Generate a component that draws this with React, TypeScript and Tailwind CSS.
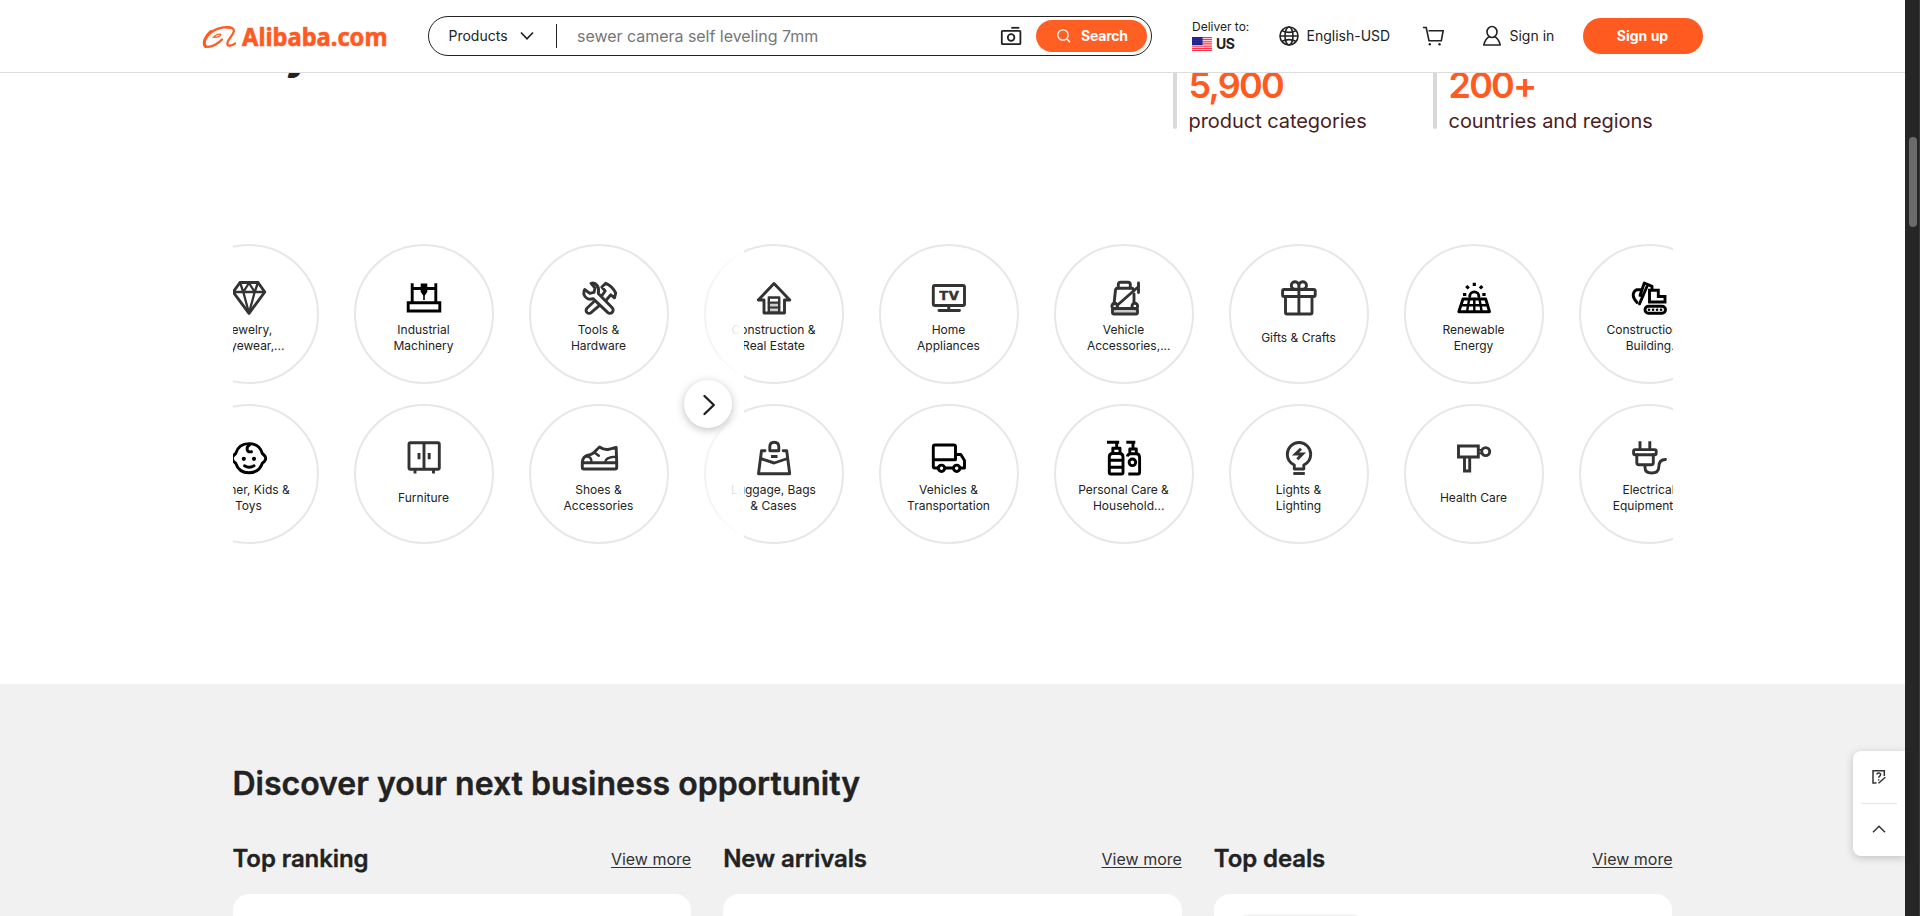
import React from "react";

type Category = {
  lines: string[];
  more?: boolean;
  icon: React.ReactNode;
  black?: boolean;
};

const gem = (
  <>
    <path d="M9 2.5H27L33.8 12 18 33.3 2.2 12Z" />
    <path d="M2.5 12H33.5M9 2.5L12.3 12 18 3 23.7 12 27 2.5M12.3 12L18 33 23.7 12" strokeWidth="2.3" />
  </>
);

const machine = (
  <>
    <path d="M6.2 3.3V22M29.8 3.3V22M6.2 8.5H29.8" strokeLinecap="butt" />
    <path d="M14.7 3.5H21.3V12L18.8 15.5V20H17.2V15.5L14.7 12Z" fill="currentColor" stroke="none" />
    <path d="M2.2 22.8H33.8V31H2.2Z" strokeLinejoin="miter" />
  </>
);

const tools = (
  <>
    <path d="M10 3.3L14 8 13 12.3 8.8 13.3 3.7 9.5C.8 15.5 6 20.8 12 18.6L26.6 32.4A3.1 3.1 0 0 0 31.2 27.8L17.3 13.6C18.8 7 15 1.8 10 3.3Z" />
    <path d="M20.8 7L24.8 3.3C29 5 32.5 8.5 34.7 13L33.5 17.8 29.8 14.8 25.3 20M20.8 7L24.2 11 21 15.5" />
    <path d="M12.5 22L5.9 28.2A3 3 0 0 0 10.3 32.4L18 25.8" />
  </>
);

const house = (
  <>
    <path d="M18 3.5L2.3 20H8V33H28.5V20H33.8Z" />
    <path d="M12.8 17.5H23.2V32.5H12.8Z" fill="#ccc" strokeWidth="2.4" />
    <path d="M14 19h8v3h-8z" fill="white" stroke="none" />
    <path d="M12.8 22.7H23.2M12.8 27.5H23.2" strokeWidth="2.2" />
  </>
);

const tv = (
  <>
    <rect x="2.3" y="5.5" width="31.2" height="20" rx="1.5" />
    <path d="M17.8 25.5V30M8 30.5H28.5" />
    <text x="8" y="19.6" fontSize="11.8" fontWeight="700" fill="currentColor" strokeWidth=".6" textLength="20" lengthAdjust="spacingAndGlyphs">
      TV
    </text>
  </>
);

const seat = (
  <>
    <path d="M12.3 8V4.5Q12.3 2.3 14.5 2.3H22Q24.3 2.3 24.3 4.5V8" />
    <path d="M8 24L9.5 10Q9.8 8.3 11.5 8.3H25.5Q27.5 8.3 27.5 10.5M28 14V23" />
    <rect x="6.5" y="28.5" width="25" height="5.5" rx="1.5" fill="#ccc" />
    <circle cx="8.7" cy="26" r="2.8" />
    <circle cx="28.8" cy="26" r="2.8" />
    <path d="M11 25.5L31.5 7.5M32.5 3V12.5" />
  </>
);

const gift = (
  <>
    <rect x="1.6" y="9.5" width="32.6" height="7" rx="1.5" />
    <path d="M4.5 16.5V32.5Q4.5 34 6 34H29.5Q31 34 31 32.5V16.5M17.9 9.5V34" />
    <path d="M17.9 9.3H13.5A3.8 3.8 0 1 1 17.9 5.5V9.3H22.3A3.8 3.8 0 1 0 17.9 5.5" />
  </>
);

const solar = (
  <>
    <path d="M7 19H29.7L33.5 31.7H2.8Z" />
    <path d="M5 25.3H31.5M13.2 19L11 31.7M18.3 19V31.7M23.5 19L25.7 31.7" strokeWidth="2.4" />
    <path d="M13.7 16.5a4.6 4.6 0 1 1 9.2 0" />
    <path d="M18.3 2.7V6M10.3 6L12.7 8.5M26.3 6L23.9 8.5M7 14.5H10.3M26.3 14.5H29.6" strokeLinecap="butt" strokeWidth="3.2" />
  </>
);

const excavator = (
  <>
    <rect x="14" y="26.3" width="20.5" height="7" rx="3.5" />
    <path d="M18 29.8h.1M22 29.8h.1M26 29.8h.1M30 29.8h.1" strokeWidth="2.6" />
    <path d="M18.5 10.3H27.3V16.5H34V22H18.5Z" strokeLinejoin="miter" />
    <path d="M9 15.5L13.3 3 21 6.3V9.8M16 6.5L8.5 23.8" />
    <path d="M9.5 9.8H5.5C1 12.5 1 17 6 22.5" />
  </>
);

const baby = (
  <>
    <path d="M18 3.6C25 3.6 29.6 7.5 31.3 13.5C35.8 17 35.8 20 31.3 23.2C29.3 29.2 24.8 32.8 18 32.8S6.7 29.2 4.7 23.2C.2 20 .2 17 4.7 13.5C6.4 7.5 11 3.6 18 3.6Z" />
    <path d="M18.5 5C15 7 15 12.6 20.5 11.8" />
    <path d="M13.5 25.8Q18.2 28.8 23 25.8" />
    <circle cx="12.8" cy="18.8" r="2.1" fill="currentColor" stroke="none" />
    <circle cx="23" cy="18.8" r="2.1" fill="currentColor" stroke="none" />
  </>
);

const cabinet = (
  <>
    <rect x="3" y="2.8" width="30.3" height="26.4" rx="1.5" />
    <path d="M18 2.8V29.2M13 13V19.3M23.2 13V19.3M9 29.2V33.5M27.5 29.2V33.5" strokeLinecap="butt" />
  </>
);

const shoe = (
  <>
    <path d="M1.3 22.8H35.7V27.5Q35.7 29 34.2 29H2.8Q1.3 29 1.3 27.5Z" />
    <path d="M1.3 22.8C1.3 18.5 4 15.5 9 14.8C13 13.8 15.5 9.5 18.5 7C21 8.8 24 10 28 9.3C31 8.8 32.5 7.8 35.2 7.5L35.7 22.8" />
    <path d="M4.5 16.5C8.5 15.8 10.8 18.5 10.5 22.5M24 22.5C24.3 19 28.5 16.8 35.2 16.8M13.5 12.5L17.8 15.8" strokeWidth="2.5" />
  </>
);

const bag = (
  <>
    <path d="M13.8 10.8V6.8Q13.8 2.2 18.2 2.2Q22.8 2.2 22.8 6.8V10.8Z" />
    <path d="M9 10.8H5.5L2.5 33.7H33.7L30.7 10.8H27.2M4.7 18.5L18.2 23 31.5 18.5" />
    <path d="M15 16.5H21.5" strokeLinecap="butt" strokeWidth="3" />
  </>
);

const truck = (
  <>
    <path d="M7 28H3.8Q2.3 28 2.3 26.5V6.5Q2.3 5 3.8 5H22.8Q24.5 5 24.5 6.5V14.5H29.8L33.5 20.5V28H29.3M14 28H21.8M2.3 19.8H24.5V14.5" />
    <circle cx="10.5" cy="28.3" r="3.2" />
    <circle cx="25.7" cy="28.3" r="3.2" />
  </>
);

const bottles = (
  <>
    <path d="M3.3 17Q3.3 13.5 6.7 13.5H13.5Q17 13.5 17 17V32.5Q17 34 15.5 34H4.8Q3.3 34 3.3 32.5Z" />
    <path d="M3.3 20.3H17M3.3 27.3H17M6.8 13V8.3H14V13M10.7 8V2.2M1 2.2H13.2" strokeLinecap="butt" />
    <path d="M22.3 34H32Q33.6 34 33.6 32.5V17.5Q33.6 13.8 30 13.8H24.5Q22 13.8 21.3 16.5M23.8 13.5V9H30.3V13.5M27 8.5V2.2M20.3 2.2H29.3" strokeLinecap="butt" />
    <circle cx="26.4" cy="22.3" r="3.3" />
  </>
);

const bulb = (
  <>
    <path d="M13.3 29V25C8.7 22.8 6.3 19 6.3 14.2A11.7 11.7 0 0 1 29.7 14.2C29.7 19 27.3 22.8 22.8 25V29Z" />
    <path d="M12.3 33.5H23.8" strokeLinecap="butt" />
    <path d="M20 8.8L14.5 14H21.5L16.3 19.2" strokeLinejoin="miter" strokeLinecap="butt" />
  </>
);

const massager = (
  <>
    <path d="M2.5 6H22.3V17H2.5ZM8.5 17H13.7V31H8.5Z" strokeLinejoin="miter" />
    <circle cx="29.7" cy="11.6" r="4" />
    <path d="M22 9.8H26M22 13.4H26" strokeWidth="1.8" />
  </>
);

const plug = (
  <>
    <path d="M9 1.3V9.5M18.8 1.3V9.5" strokeLinecap="butt" />
    <rect x="2.6" y="9.6" width="22.6" height="5.2" rx="1.5" />
    <path d="M5.8 14.8V22.8Q5.8 24.8 7.8 24.8H20.3Q22.3 24.8 22.3 22.8V14.8M14 25V27.5C14 31.5 17 33 20.5 33C26 33 27.8 30.5 27.8 27C27.8 21.5 30 19.5 34.5 19.5" />
  </>
);

const rows: Category[][] = [
  [
    { lines: ["Jewelry,", "Eyewear,"], more: true, icon: gem },
    { lines: ["Industrial", "Machinery"], icon: machine, black: true },
    { lines: ["Tools &", "Hardware"], icon: tools },
    { lines: ["Construction &", "Real Estate"], icon: house },
    { lines: ["Home", "Appliances"], icon: tv },
    { lines: ["Vehicle", "Accessories,"], more: true, icon: seat },
    { lines: ["Gifts & Crafts"], icon: gift },
    { lines: ["Renewable", "Energy"], icon: solar, black: true },
    { lines: ["Construction &", "Building"], more: true, icon: excavator, black: true },
  ],
  [
    { lines: ["Mother, Kids &", "Toys"], icon: baby, black: true },
    { lines: ["Furniture"], icon: cabinet },
    { lines: ["Shoes &", "Accessories"], icon: shoe },
    { lines: ["Luggage, Bags", "& Cases"], icon: bag },
    { lines: ["Vehicles &", "Transportation"], icon: truck, black: true },
    { lines: ["Personal Care &", "Household"], more: true, icon: bottles, black: true },
    { lines: ["Lights &", "Lighting"], icon: bulb },
    { lines: ["Health Care"], icon: massager },
    { lines: ["Electrical", "Equipment &"], more: true, icon: plug },
  ],
];

function CategoryCircle({ item }: { item: Category }) {
  return (
    <div className="flex size-[140px] shrink-0 flex-col items-center rounded-full border-2 border-[#e7e7e7] pt-[34px]">
      <svg
        viewBox="0 0 36 36"
        className={`size-9 shrink-0 overflow-visible ${item.black ? "text-black" : "text-[#333]"}`}
        fill="none"
        stroke="currentColor"
        strokeWidth="2.9"
        strokeLinecap="round"
        strokeLinejoin="round"
      >
        {item.icon}
      </svg>
      <div className="mt-[6px] flex h-8 flex-col justify-center text-center text-xs leading-4 whitespace-nowrap text-[#222]">
        {item.lines.map((line, i) => (
          <div key={line}>
            {line}
            {item.more && i === item.lines.length - 1 && <span className="inline-block h-4 w-0 align-top">...</span>}
          </div>
        ))}
      </div>
    </div>
  );
}

function Stat({ value, label }: { value: string; label: string }) {
  return (
    <div className="flex w-[260px] gap-[11.5px]">
      <div className="h-[75px] w-1 rounded-full bg-[#d9d9d9]" />
      <div className="pt-[9px] whitespace-nowrap">
        <div className="text-[36px] leading-[44px] font-semibold tracking-[-1.8px] text-[#ff5a1f]">{value}</div>
        <div className="text-xl leading-7 tracking-[-0.05px] text-[#4b1d1f]">{label}</div>
      </div>
    </div>
  );
}

function Flag() {
  return (
    <svg viewBox="0 0 20 14" className="h-[14px] w-5">
      <path fill="#fff" d="M0 0h20v14H0z" />
      <path d="M0 .5h20M0 2.65h20M0 4.8h20M0 6.95h20M0 9.1h20M0 11.25h20M0 13.4h20" stroke="#ff3347" strokeWidth="1.25" />
      <path fill="#20208e" d="M0 0h10.5v8H0z" />
      <path d="M1 1.5h9M1 3.5h9M1 5.5h9" stroke="#5050b0" strokeWidth=".5" strokeDasharray=".8 .9" />
    </svg>
  );
}

function Header() {
  return (
    <header className="flex h-[73px] shrink-0 items-start border-b border-[#ddd] bg-white pl-[202px] text-sm text-[#222]">
      <div className="flex h-[73px] w-[226px] items-center text-[#ff5a1f]">
        <svg viewBox="0 0 34 24" className="h-6 w-[34px]" fill="none" stroke="currentColor" strokeLinecap="round" strokeLinejoin="round">
          <path d="M28 2.6C21 .8 9.5 4.5 4 12.5C.8 17.5 1 21.6 5.5 21.8C10 22 16.5 18.5 20 14.5" strokeWidth="2.2" />
          <path d="M9 6.5C3 11.5 .8 18 3.5 21.5" strokeWidth="3" />
          <path d="M11 12.2C15 12.5 19 11.3 18.8 9.7C18.5 8.6 14.5 9.8 12.5 11" strokeWidth="1.3" />
          <path d="M24 2.5C30 1.6 33.5 4 31 8.5C29 12 25.5 15.5 25.3 18.8C25.3 21.5 29.5 21.3 33.3 18.4" strokeWidth="2.2" />
        </svg>
        <svg viewBox="0 0 149 30" className="ml-1 h-[30px] w-[149px]">
          <text x="2" y="24" fontSize="24.5" fontWeight="700" fill="currentColor" fontFamily="'Noto Sans','Open Sans',sans-serif" textLength="145.5" lengthAdjust="spacingAndGlyphs" stroke="currentColor" strokeWidth=".6">
            Alibaba.com
          </text>
        </svg>
      </div>

      <div className="mt-4 flex h-10 w-[724px] items-center rounded-full border border-[#222] pr-1 pl-[19.5px]">
        <span className="w-[71px]">Products</span>
        <svg viewBox="0 0 14 10" className="h-[10px] w-[14px]" fill="none" stroke="currentColor" strokeWidth="1.7">
          <path d="M1 1.5L7 7.8 13 1.5" />
        </svg>
        <div className="ml-[22.5px] h-6 w-px bg-[#222]" />
        <span className="ml-5 flex-1 text-base tracking-[-0.03px] text-[#767676]">sewer camera self leveling 7mm</span>
        <svg viewBox="0 0 22 20" className="mr-[14px] h-5 w-[22px]" fill="none" stroke="currentColor" strokeWidth="1.8">
          <rect x="1.8" y="4.8" width="18.6" height="13.4" rx=".8" />
          <circle cx="11.1" cy="11.5" r="3.3" />
          <path d="M11.3 1.8H19.3" />
        </svg>
        <button className="flex h-8 w-[111px] items-center rounded-full bg-[#ff5f22] pl-5 font-bold text-white">
          <svg viewBox="0 0 16 16" className="size-4" fill="none" stroke="currentColor" strokeWidth="1.3">
            <circle cx="7" cy="7" r="5.2" />
            <path d="M11 11L14 14.3" />
          </svg>
          <span className="ml-[9px] tracking-[-0.2px]">Search</span>
        </button>
      </div>

      <div className="mt-[18px] ml-10 w-[86.5px]">
        <div className="text-xs leading-[18px]">Deliver to:</div>
        <div className="flex items-center gap-1 leading-4 font-bold">
          <Flag />
          <span className="tracking-[-0.4px]">US</span>
        </div>
      </div>

      <div className="flex h-[72px] w-36 items-center gap-2">
        <svg viewBox="0 0 20 20" className="size-5" fill="none" stroke="currentColor" strokeWidth="1.6">
          <circle cx="10" cy="10" r="9" />
          <ellipse cx="10" cy="10" rx="4" ry="9" />
          <path d="M1.2 10H18.8M3 4.6C7 7 13 7 17 4.6M3 15.4C7 13 13 13 17 15.4" />
        </svg>
        English-USD
      </div>

      <div className="flex h-[72px] w-[59px] items-center">
        <svg viewBox="0 0 21 20" className="h-5 w-[21px]" fill="none" stroke="currentColor" strokeWidth="1.6">
          <path d="M0 1.5H3.2L6 14.7H18.3L20.2 4.7H5.5" />
          <circle cx="6.8" cy="18.2" r="1.2" fill="currentColor" stroke="none" />
          <circle cx="16.5" cy="18.2" r="1.2" fill="currentColor" stroke="none" />
        </svg>
      </div>

      <div className="flex h-[72px] w-[101.5px] items-center gap-2">
        <svg viewBox="0 0 20 22" className="h-[22px] w-5" fill="none" stroke="currentColor" strokeWidth="1.6" strokeLinejoin="round">
          <ellipse cx="10" cy="7" rx="5" ry="5.5" />
          <path d="M6.8 11.8C4.5 13.5 2.5 16.2 1.8 20H18.2C17.5 16.2 15.5 13.5 13.2 11.8" />
        </svg>
        Sign in
      </div>

      <button className="mt-[18px] h-9 w-[120px] rounded-full bg-[#ff5a1f] pr-px font-bold text-white">Sign up</button>
    </header>
  );
}

function Column({ title, children }: { title: string; children?: React.ReactNode }) {
  return (
    <div>
      <div className="flex h-9 items-center justify-between">
        <h3 className="mt-0.5 text-2xl font-semibold tracking-[-0.1px] [-webkit-text-stroke:0.35px]">{title}</h3>
        <a className="mt-[2px] text-base text-[#333] underline underline-offset-2">View more</a>
      </div>
      <div className="mt-[18px] h-[200px] rounded-2xl bg-white p-5">{children}</div>
    </div>
  );
}

export default function App() {
  return (
    <div className="relative flex h-[916px] w-full overflow-hidden bg-white font-['Inter','Liberation_Sans',sans-serif] text-[#222]">
      <div className="flex min-w-0 flex-1 flex-col">
        <Header />

        <section className="flex h-[171px] shrink-0 items-start justify-between overflow-hidden pl-[232px]">
          <h1 className="-mt-[47px] text-[44px] leading-[54px] font-bold">to your business needs</h1>
          <div className="-mt-[19px] flex w-[732px]">
            <Stat value="5,900" label="product categories" />
            <Stat value="200+" label="countries and regions" />
          </div>
        </section>

        <section className="relative mx-auto h-[440px] w-[1440px] shrink-0">
          <div className="flex flex-col gap-5 overflow-hidden">
            {rows.map((row, i) => (
              <div key={i} className="-ml-[54px] flex gap-[35px]">
                {row.map((item) => (
                  <CategoryCircle key={item.lines.join(" ")} item={item} />
                ))}
              </div>
            ))}
          </div>
          <div className="absolute top-0 left-[431px] h-[300px] w-20 bg-linear-to-r from-white/0 to-white" />
          <button className="absolute top-[136px] left-[451px] flex size-12 items-center justify-center rounded-full bg-white shadow-[0_2px_8px_rgba(0,0,0,0.25)]">
            <svg viewBox="0 0 24 24" className="size-6" fill="none" stroke="currentColor" strokeWidth="2.4" strokeLinecap="round" strokeLinejoin="round">
              <path d="M8.5 4L17.8 13 8.5 22" />
            </svg>
          </button>
        </section>

        <section className="flex-1 overflow-hidden bg-[#f1f1f1] pt-20">
          <div className="mx-auto w-[1440px]">
            <h2 className="text-[32px] leading-10 font-semibold [-webkit-text-stroke:0.4px]">Discover your next business opportunity</h2>
            <div className="mt-9 grid grid-cols-3 gap-8">
              <Column title="Top ranking" />
              <Column title="New arrivals" />
              <Column title="Top deals">
                <div className="h-8 w-[134px] rounded-2xl bg-[#f4f4f4]" />
              </Column>
            </div>
          </div>
        </section>
      </div>

      <div className="h-full w-[15px] shrink-0 border-r border-[#3a3a3a] bg-[#262626] pt-[137px] pl-1">
        <div className="h-[90px] w-2 rounded-full bg-[#6b6b6b]" />
      </div>

      <aside className="absolute top-[751px] right-[15px] flex h-[105px] w-[52px] flex-col items-center rounded-l-lg bg-white text-[#333] shadow-[0_2px_8px_rgba(0,0,0,0.2)]">
        <div className="flex h-[52px] items-center">
          <svg viewBox="0 0 14 14" className="size-[14px]" fill="none" stroke="currentColor" strokeWidth="1.5">
            <path d="M12.3 6V.8H1V13H4.5M6.5 13.3L13.3 7.3M4.8 4.5C5 2.3 8.8 2.5 8.6 4.8C8.5 6.2 6.7 6 6.7 7.8M6.7 9.2V10.6" />
          </svg>
        </div>
        <div className="h-px w-9 bg-[#e5e5e5]" />
        <div className="flex h-[50px] items-center">
          <svg viewBox="0 0 14 8" className="h-2 w-[14px]" fill="none" stroke="currentColor" strokeWidth="1.5">
            <path d="M1 7.2L7 1.2 13 7.2" />
          </svg>
        </div>
      </aside>
    </div>
  );
}
